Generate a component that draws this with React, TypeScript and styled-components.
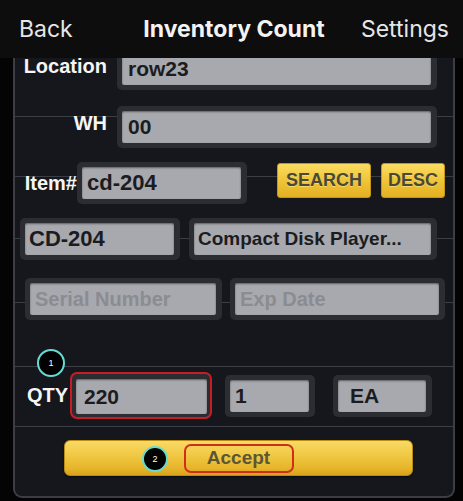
import React from "react";
import styled, { createGlobalStyle } from "styled-components";

const Global = createGlobalStyle`
  html, body { margin: 0; padding: 0; background: #000; }
  body { width: 463px; height: 501px; overflow: hidden; font-family: "Liberation Sans", Arial, sans-serif; }
  * { box-sizing: border-box; }
`;

const Screen = styled.div`
  width: 463px;
  height: 501px;
  background: #040404;
  overflow: hidden;
  display: flex;
  flex-direction: column;
`;

const Header = styled.header`
  position: relative;
  z-index: 2;
  flex: none;
  height: 58px;
  background: #0d0d0d;
  display: grid;
  grid-template-columns: 1fr auto 1fr;
  align-items: center;
  padding: 0 14px 0 19px;
  font-family: Inter, "Liberation Sans", sans-serif;
  color: #e6e6e6;
`;

const NavLink = styled.span<{ $end?: boolean }>`
  font-size: 23px;
  font-weight: 400;
  justify-self: ${(p) => (p.$end ? "end" : "start")};
`;

const Title = styled.h1`
  margin: 0;
  font-size: 23px;
  font-weight: 700;
  color: #f3f3f3;
`;

const Panel = styled.main`
  flex: none;
  margin: -18px 8px 0 13px;
  height: 458px;
  padding-top: 8px;
  background: #15171c;
  border: 2px solid #3b3e45;
  border-top: none;
  border-radius: 0 0 9px 9px;
  display: flex;
  flex-direction: column;
`;

const Row = styled.div<{ $mt: number; $line?: number; $pl?: number; $gap?: number }>`
  display: flex;
  align-items: center;
  height: 42px;
  margin-top: ${(p) => p.$mt}px;
  padding-left: ${(p) => p.$pl ?? 0}px;
  gap: ${(p) => p.$gap ?? 0}px;
  background: ${(p) =>
    p.$line !== undefined
      ? `linear-gradient(#3b3e45, #3b3e45) 0 ${p.$line}px / 100% 1px no-repeat`
      : "none"};
`;

const Label = styled.label<{ $w: number; $lift?: number }>`
  flex: none;
  width: ${(p) => p.$w}px;
  text-align: right;
  font-size: 20px;
  font-weight: 700;
  color: #f5f5f5;
  padding-bottom: ${(p) => p.$lift ?? 0}px;
  white-space: nowrap;
`;

const Field = styled.div<{ $w: number; $highlight?: boolean }>`
  flex: none;
  width: ${(p) => p.$w}px;
  height: ${(p) => (p.$highlight ? 47 : 42)}px;
  padding: ${(p) => (p.$highlight ? "5px 3px 3px 4px" : "5px 6px 5px 5px")};
  background: #2b2d33;
  border: ${(p) => (p.$highlight ? "2px solid #c91d26" : "none")};
  border-radius: ${(p) => (p.$highlight ? 7 : 5)}px;
  display: flex;
`;

const Input = styled.input<{ $pad?: number; $size?: number }>`
  flex: 1;
  min-width: 0;
  height: 100%;
  margin: 0;
  border: none;
  outline: none;
  border-radius: 2px;
  background: #a7a9ae;
  box-shadow: inset 0 1px 2px rgba(0, 0, 0, 0.45);
  padding: 0 0 0 ${(p) => p.$pad ?? 5}px;
  font-family: "Liberation Sans", Arial, sans-serif;
  font-size: ${(p) => p.$size ?? 21}px;
  font-weight: 700;
  color: #1c1c1e;
  &::placeholder {
    color: #8a8c92;
    opacity: 1;
  }
`;

const YellowButton = styled.button<{ $w: number; $ml?: number }>`
  flex: none;
  align-self: flex-start;
  margin: 1px 0 0 ${(p) => p.$ml ?? 0}px;
  width: ${(p) => p.$w}px;
  height: 35px;
  padding: 0;
  border: 1px solid #c4961a;
  border-radius: 3px;
  background: linear-gradient(#fadc62, #f0c73c 45%, #e4b022);
  font-family: "Liberation Sans", Arial, sans-serif;
  font-size: 18px;
  font-weight: 700;
  color: #4b4838;
  text-shadow: 0 1px 0 rgba(255, 240, 170, 0.5);
`;

const QtySection = styled.section`
  position: relative;
  margin-top: 46px;
  border-top: 1px solid #3d4048;
  border-bottom: 1px solid #3d4048;
  padding: 5px 0 7px 12px;
  display: flex;
  align-items: center;
`;

const Badge = styled.span<{ $size: number; $top: number; $left: number }>`
  position: absolute;
  top: ${(p) => p.$top}px;
  left: ${(p) => p.$left}px;
  width: ${(p) => p.$size}px;
  height: ${(p) => p.$size}px;
  border-radius: 50%;
  border: 2px solid #66dbd2;
  background: #020203;
  color: #fff;
  font-family: "Liberation Sans", Arial, sans-serif;
  font-size: 9px;
  font-weight: 400;
  display: flex;
  align-items: center;
  justify-content: center;
`;

const AcceptButton = styled.button`
  position: relative;
  flex: none;
  margin: 13px 0 0 49px;
  width: 349px;
  height: 36px;
  padding: 0;
  border: 1px solid #b98c15;
  border-radius: 6px;
  background: linear-gradient(#f8da66, #f1c945 40%, #e6b52a 80%, #d9a31c);
  box-shadow: 0 1px 2px rgba(0, 0, 0, 0.6);
  display: flex;
  align-items: center;
  justify-content: center;
`;

const AcceptLabel = styled.span`
  width: 110px;
  height: 29px;
  border: 2px solid #d22d1c;
  border-radius: 7px;
  display: flex;
  align-items: center;
  justify-content: center;
  font-family: "Liberation Sans", Arial, sans-serif;
  font-size: 19px;
  font-weight: 700;
  color: #5d5634;
`;

export default function App() {
  return (
    <Screen>
      <Global />
      <Header>
        <NavLink>Back</NavLink>
        <Title>Inventory Count</Title>
        <NavLink $end>Settings</NavLink>
      </Header>
      <Panel>
        <Row $mt={0} $gap={10}>
          <Label $w={92} $lift={6}>Location</Label>
          <Field $w={320}>
            <Input readOnly defaultValue="row23" $pad={6} />
          </Field>
        </Row>
        <Row $mt={16} $gap={10} $line={10}>
          <Label $w={92} $lift={8}>WH</Label>
          <Field $w={320}>
            <Input readOnly defaultValue="00" $pad={6} />
          </Field>
        </Row>
        <Row $mt={14} $pl={7} $line={14}>
          <Label $w={55}>Item#</Label>
          <Field $w={170}>
            <Input readOnly defaultValue="cd-204" $size={22} />
          </Field>
          <YellowButton $w={94} $ml={30}>SEARCH</YellowButton>
          <YellowButton $w={64} $ml={10}>DESC</YellowButton>
        </Row>
        <Row $mt={14} $pl={5} $gap={9} $line={20}>
          <Field $w={160}>
            <Input readOnly defaultValue="CD-204" $size={22} $pad={4} />
          </Field>
          <Field $w={248}>
            <Input readOnly defaultValue="Compact Disk Player..." $size={19} $pad={4} />
          </Field>
        </Row>
        <Row $mt={18} $pl={10} $gap={8} $line={24}>
          <Field $w={197}>
            <Input readOnly placeholder="Serial Number" $size={20} />
          </Field>
          <Field $w={215}>
            <Input readOnly placeholder="Exp Date" $size={20} />
          </Field>
        </Row>
        <QtySection>
          <Badge $size={28} $top={-18} $left={22}>1</Badge>
          <Label $w={41}>QTY</Label>
          <Field $w={142} $highlight style={{ marginLeft: 2 }}>
            <Input readOnly defaultValue="220" $pad={8} />
          </Field>
          <Field $w={90} style={{ marginLeft: 13 }}>
            <Input readOnly defaultValue="1" $pad={5} />
          </Field>
          <Field $w={99} style={{ marginLeft: 18 }}>
            <Input readOnly defaultValue="EA" $pad={12} />
          </Field>
        </QtySection>
        <AcceptButton>
          <Badge $size={26} $top={5} $left={77}>2</Badge>
          <AcceptLabel>Accept</AcceptLabel>
        </AcceptButton>
      </Panel>
    </Screen>
  );
}
